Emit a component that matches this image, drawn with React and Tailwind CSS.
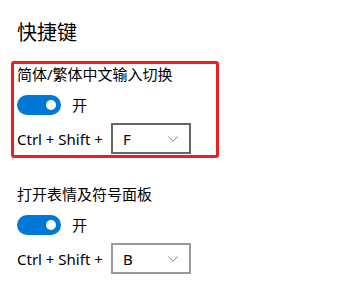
import { ChevronDown } from 'lucide-react'

const font = { fontFamily: '"Noto Sans", "Noto Sans CJK SC", sans-serif' }

function Toggle({ on }) {
  return (
    <div className="flex items-center gap-[11px]">
      <div className="relative h-[20px] w-[44px] rounded-full bg-[#0078d7]">
        <span className="absolute right-[5px] top-[5px] h-[10px] w-[10px] rounded-full bg-white" />
      </div>
      <span className="text-[15px] leading-[20px] text-black">{on ? '开' : '关'}</span>
    </div>
  )
}

function Combo({ value, dark }) {
  return (
    <div
      className={`flex h-[31px] w-[80px] items-center justify-between border-2 pl-[10px] pr-[7px] ${
        dark ? 'border-[#666666]' : 'border-[#999999]'
      }`}
    >
      <span className="text-[15px] leading-[20px] text-black">{value}</span>
      <ChevronDown size={18} strokeWidth={1} className="text-[#555]" />
    </div>
  )
}

function Shortcut({ label, keyValue, dark }) {
  return (
    <div>
      <p className="text-[15px] leading-[20px] text-black">{label}</p>
      <div className="mt-[11px]">
        <Toggle on />
      </div>
      <div className="mt-[8px] flex items-center">
        <span className="w-[94px] text-[15px] leading-[20px] text-black">Ctrl + Shift +</span>
        <Combo value={keyValue} dark={dark} />
      </div>
    </div>
  )
}

export default function App() {
  return (
    <div className="h-[281px] w-[354px] bg-white" style={font}>
      <div className="pl-[17px] pt-[20px]">
        <h2 className="text-[20px] leading-[26px] text-black">快捷键</h2>
      </div>
      {/* 选中的项 */}
      <div className="ml-[11px] mt-[15px] w-[208px] rounded-[3px] border-[3px] border-[#f01e1e] pb-[1px] pl-[3px]">
        <Shortcut label="简体/繁体中文输入切换" keyValue="F" dark />
      </div>
      <div className="mt-[26px] pl-[17px]">
        <Shortcut label="打开表情及符号面板" keyValue="B" />
      </div>
    </div>
  )
}
